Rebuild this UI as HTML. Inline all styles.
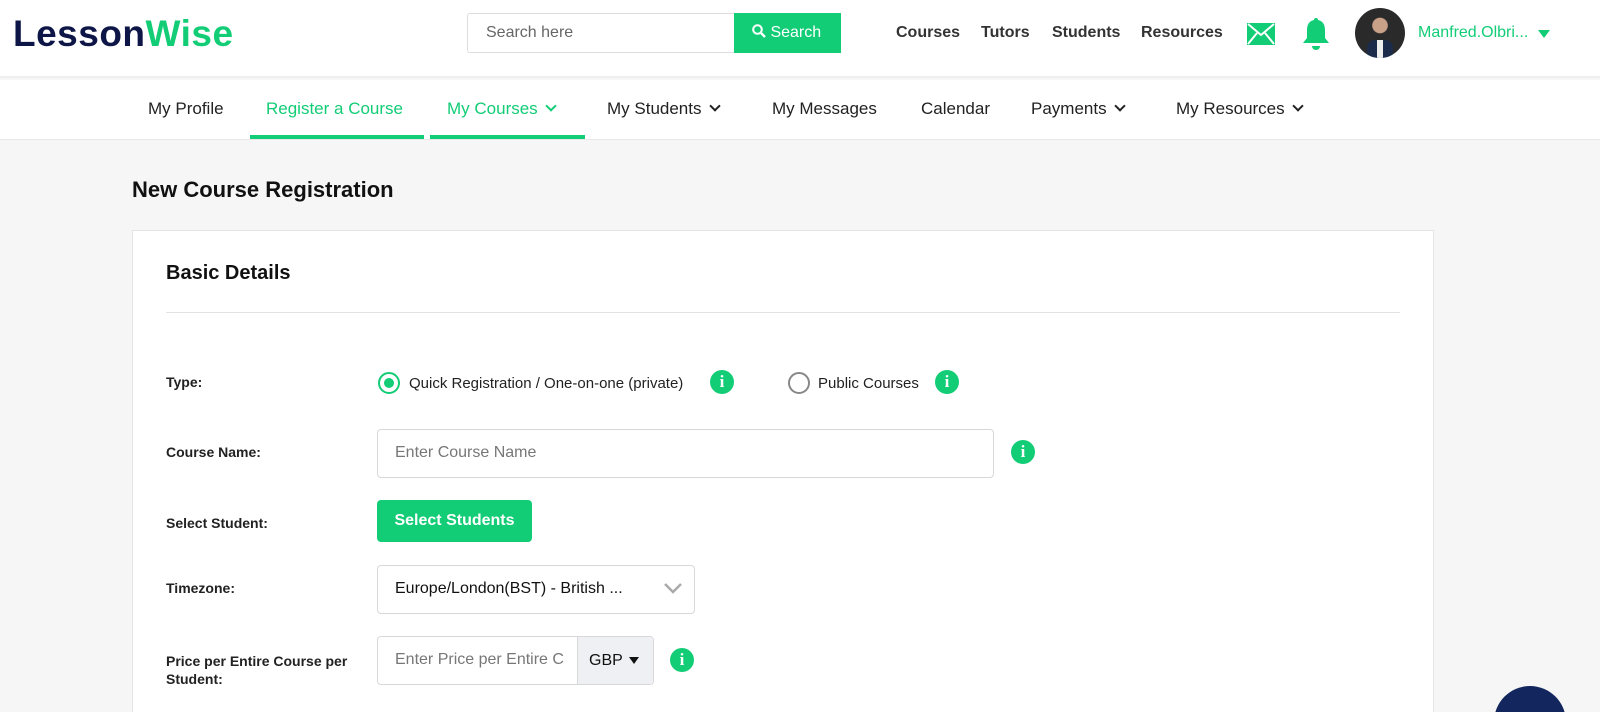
<!DOCTYPE html>
<html><head><meta charset="utf-8"><style>
*{box-sizing:border-box;margin:0;padding:0}
html,body{width:1600px;height:712px;overflow:hidden}
body{background:#f6f6f6;font-family:"Liberation Sans",sans-serif;color:#111;position:relative}
.g{color:#12cd76 !important}
.hdr{position:absolute;left:0;top:0;width:1600px;height:78px;background:#fff;border-bottom:2px solid #eee}
.logo{position:absolute;left:13px;top:13px;font-size:37px;font-weight:bold;color:#0d1646;letter-spacing:0.5px}
.srch{position:absolute;left:467px;top:13px;width:268px;height:40px;border:1px solid #ddd;border-right:none;border-radius:3px 0 0 3px;font-size:16px;color:#666;padding:10px 18px}
.sbtn{position:absolute;left:734px;top:13px;width:107px;height:40px;background:#12cd76;color:#fff;font-size:16px;padding:10px 0 0 18px}
.tl{position:absolute;top:24px;font-size:16px;font-weight:bold;color:#333}
.nav{position:absolute;left:0;top:80px;width:1600px;height:60px;background:#fff;border-bottom:1px solid #e8e8e8}
.ni{position:absolute;top:19px;font-size:17px;color:#222}
.ul{position:absolute;top:55px;height:4px;background:#12cd76}
.chev{display:inline-block;width:8px;height:8px;border-right:2px solid currentColor;border-bottom:2px solid currentColor;transform:rotate(45deg);margin-left:9px;position:relative;top:-4px}
h1{position:absolute;left:132px;top:177px;font-size:22px}
.card{position:absolute;left:132px;top:230px;width:1302px;height:482px;background:#fff;border:1px solid #e4e4e4;border-bottom:none}
h2{position:absolute;left:166px;top:262px;font-size:20px}
.hr{position:absolute;left:166px;top:312px;width:1234px;height:1px;background:#e2e2e2}
.lb{position:absolute;left:166px;font-size:14px;font-weight:bold;color:#222}
.inp{position:absolute;border:1px solid #d8d8d8;border-radius:4px;background:#fff;font-size:16px;color:#777;padding:14px 17px}
.info{position:absolute;width:24px;height:24px;border-radius:50%;background:#12cd76;color:#fff;font-family:"Liberation Serif",serif;font-weight:bold;font-size:17px;text-align:center;line-height:24px}
.rad{position:absolute;width:22px;height:22px;border-radius:50%;border:2px solid #888}
.rt{position:absolute;font-size:15px;color:#222}
</style></head><body>
<div class="hdr">
<div class="logo">Lesson<span class="g">Wise</span></div>
<div class="srch">Search here</div>
<div class="sbtn"><svg width="14" height="14" viewBox="0 0 14 14" style="position:relative;top:1px"><circle cx="5.5" cy="5.5" r="4.3" fill="none" stroke="#fff" stroke-width="2"/><path d="M8.7 8.7L13 13" stroke="#fff" stroke-width="2.4"/></svg> Search</div>
<div class="tl" style="left:896px">Courses</div>
<div class="tl" style="left:981px">Tutors</div>
<div class="tl" style="left:1052px">Students</div>
<div class="tl" style="left:1141px">Resources</div>
<svg style="position:absolute;left:1247px;top:23px" width="28" height="22" viewBox="0 0 28 22"><rect x="0" y="0" width="28" height="22" fill="#12cd76"/><path d="M1 1L14 12L27 1M1 21L10 10M27 21L18 10" stroke="#fff" stroke-width="2" fill="none"/></svg>
<svg style="position:absolute;left:1302px;top:16px" width="28" height="36" viewBox="0 0 28 36"><path d="M14 2C15.5 2 16 3 16 4C21 5 23 9 23 14V22L27 27H1L5 22V14C5 9 7 5 12 4C12 3 12.5 2 14 2Z" fill="#12cd76"/><path d="M10 30H18C18 32.5 16 34 14 34C12 34 10 32.5 10 30Z" fill="#12cd76"/></svg>
<div style="position:absolute;left:1355px;top:8px;width:50px;height:50px;border-radius:50%;background:radial-gradient(circle at 50% 35%,#c9a088 0 18%,#2a2a2a 20%);overflow:hidden"><div style="position:absolute;left:12px;top:32px;width:26px;height:20px;background:#1d2b4a;border-radius:8px 8px 0 0"></div><div style="position:absolute;left:22px;top:32px;width:6px;height:18px;background:#eee"></div></div>
<div style="position:absolute;left:1418px;top:24px;font-size:16px;color:#12cd76">Manfred.Olbri...</div>
<div style="position:absolute;left:1538px;top:30px;border-left:6px solid transparent;border-right:6px solid transparent;border-top:8px solid #12cd76"></div>
</div>
<div class="nav">
<div class="ni" style="left:148px">My Profile</div>
<div class="ni g" style="left:266px">Register a Course</div>
<div class="ni g" style="left:447px">My Courses<span class="chev"></span></div>
<div class="ni" style="left:607px">My Students<span class="chev"></span></div>
<div class="ni" style="left:772px">My Messages</div>
<div class="ni" style="left:921px">Calendar</div>
<div class="ni" style="left:1031px">Payments<span class="chev"></span></div>
<div class="ni" style="left:1176px">My Resources<span class="chev"></span></div>
<div class="ul" style="left:250px;width:174px"></div>
<div class="ul" style="left:430px;width:155px"></div>
</div>
<h1>New Course Registration</h1>
<div class="card"></div>
<h2>Basic Details</h2>
<div class="hr"></div>
<div class="lb" style="top:374px">Type:</div>
<div class="rad" style="left:378px;top:372px;border-color:#12cd76"><div style="position:absolute;left:4px;top:4px;width:10px;height:10px;border-radius:50%;background:#12cd76"></div></div>
<div class="rt" style="left:409px;top:375px">Quick Registration / One-on-one (private)</div>
<div class="info" style="left:710px;top:370px">i</div>
<div class="rad" style="left:788px;top:372px"></div>
<div class="rt" style="left:818px;top:375px">Public Courses</div>
<div class="info" style="left:935px;top:370px">i</div>
<div class="lb" style="top:444px">Course Name:</div>
<div class="inp" style="left:377px;top:429px;width:617px;height:49px">Enter Course Name</div>
<div class="info" style="left:1011px;top:440px">i</div>
<div class="lb" style="top:515px">Select Student:</div>
<div style="position:absolute;left:377px;top:500px;width:155px;height:42px;background:#12cd76;border-radius:4px;color:#fff;font-size:16px;font-weight:bold;text-align:center;line-height:42px">Select Students</div>
<div class="lb" style="top:580px">Timezone:</div>
<div class="inp" style="left:377px;top:565px;width:318px;height:49px;color:#111">Europe/London(BST) - British ...</div>
<svg style="position:absolute;left:664px;top:582px" width="18" height="12" viewBox="0 0 18 12"><path d="M1 2L9 10L17 2" stroke="#aaa" stroke-width="2.5" fill="none"/></svg>
<div class="lb" style="top:652px;line-height:18px">Price per Entire Course per<br>Student:</div>
<div class="inp" style="left:377px;top:636px;width:277px;height:49px;overflow:hidden;white-space:nowrap;padding-right:100px">Enter Price per Entire C</div>
<div style="position:absolute;left:577px;top:637px;width:76px;height:47px;background:#eef0f3;border-left:1px solid #d8d8d8;border-radius:0 4px 4px 0;font-size:16px;padding:15px 0 0 11px;color:#111">GBP</div>
<div style="position:absolute;left:629px;top:657px;border-left:5px solid transparent;border-right:5px solid transparent;border-top:7px solid #111"></div>
<div class="info" style="left:670px;top:648px">i</div>
<div style="position:absolute;left:1494px;top:686px;width:72px;height:26px;overflow:hidden"><div style="width:72px;height:72px;border-radius:50%;background:#13275e"></div></div>
</body></html>
